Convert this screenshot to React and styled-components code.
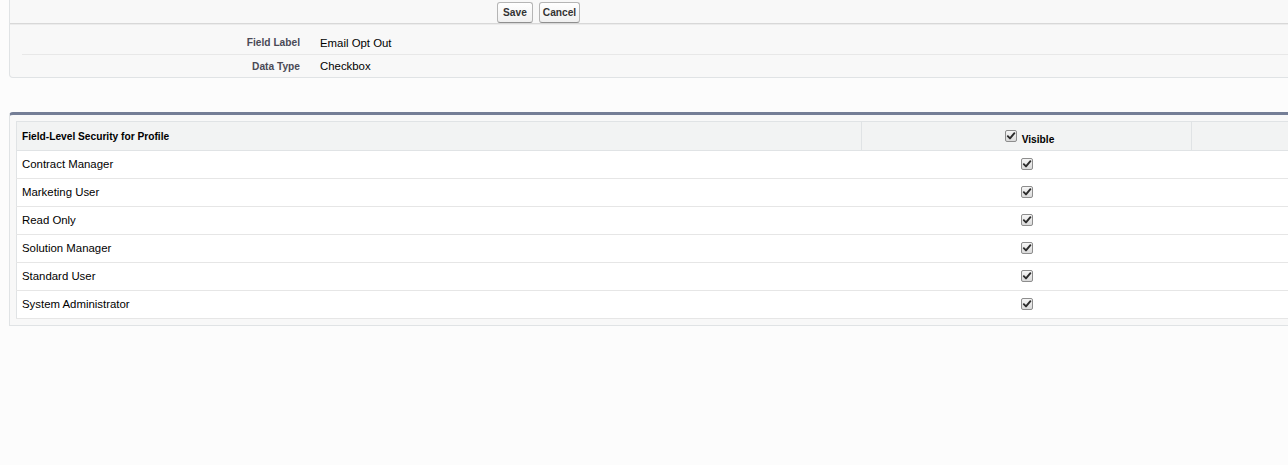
import React from 'react'
import styled, { createGlobalStyle } from 'styled-components'

const profiles = [
    'Contract Manager',
    'Marketing User',
    'Read Only',
    'Solution Manager',
    'Standard User',
    'System Administrator',
]

const details = [
    { label: 'Field Label', value: 'Email Opt Out' },
    { label: 'Data Type', value: 'Checkbox' },
]

const Check = () => (
    <CheckBox>
        <svg width="10" height="10" viewBox="0 0 10 10">
            <path d="M1.8 5.2 L4 7.4 L8.4 2.2" fill="none" stroke="#2b2b2b" strokeWidth="1.9" strokeLinecap="round" strokeLinejoin="round" />
        </svg>
    </CheckBox>
)

export default () => {
    return (
        <>
            <GlobalStyle />
            <Page>
                <DetailPanel>
                    <ButtonBar>
                        <Button pad={5}>Save</Button>
                        <Button pad={3}>Cancel</Button>
                    </ButtonBar>
                    <DetailList>
                        {details.map(d => (
                            <DetailRow key={d.label}>
                                <DetailLabel>{d.label}</DetailLabel>
                                <DetailValue>{d.value}</DetailValue>
                            </DetailRow>
                        ))}
                    </DetailList>
                </DetailPanel>

                <SecurityPanel>
                    <Table>
                        <colgroup>
                            <col style={{ width: 845 }} />
                            <col style={{ width: 330 }} />
                            <col />
                        </colgroup>
                        <thead>
                            <tr>
                                <HeadCell>Field-Level Security for Profile</HeadCell>
                                <HeadCell center>
                                    <VisibleHead>
                                        <Check />
                                        <VisibleText>Visible</VisibleText>
                                    </VisibleHead>
                                </HeadCell>
                                <HeadCell />
                            </tr>
                        </thead>
                        <tbody>
                            {profiles.map(p => (
                                <Row key={p}>
                                    <Cell>{p}</Cell>
                                    <Cell center><Check /></Cell>
                                    <Cell />
                                </Row>
                            ))}
                        </tbody>
                    </Table>
                </SecurityPanel>
            </Page>
        </>
    );
}

const GlobalStyle = createGlobalStyle`
    html, body {
        margin: 0;
        padding: 0;
        background: #fcfcfc;
        overflow: hidden;
    }
    body {
        font-family: "Liberation Sans", Arial, sans-serif;
        color: #000;
    }
`
const Page = styled.div`
    width: 1340px;
    padding-left: 9px;
`
const DetailPanel = styled.div`
    background: #f8f8f8;
    border: 1px solid #e0e3e5;
    border-top: none;
    border-bottom-left-radius: 4px;
`
const ButtonBar = styled.div`
    display: flex;
    align-items: center;
    gap: 6px;
    height: 23px;
    padding-left: 487px;
    border-bottom: 1px solid #d8d8d8;
    box-shadow: 0 1px 0 #ececec;
`
const Button = styled.button`
    height: 21px;
    margin-top: 1px;
    padding: 0 ${p => p.pad}px;
    font-family: "Liberation Sans", Arial, sans-serif;
    font-size: 10.2px;
    font-weight: bold;
    color: #333;
    background: linear-gradient(#ffffff, #f0f0f0);
    border: 1px solid #b5b5b5;
    border-bottom-color: #8f8f8f;
    border-radius: 3px;
`
const DetailList = styled.div`
    padding: 7px 0 0 12px;
`
const DetailRow = styled.div`
    display: grid;
    grid-template-columns: 288px 1fr;
    align-items: center;
    height: 23px;
    &:not(:last-child) {
        border-bottom: 1px solid #e8e8e8;
    }
    &:last-child {
        height: 22px;
    }
`
const DetailLabel = styled.span`
    padding-right: 10px;
    text-align: right;
    font-size: 10.2px;
    font-weight: bold;
    color: #4a4a56;
`
const DetailValue = styled.span`
    padding-left: 10px;
    font-size: 11.4px;
    color: #000;
`
const SecurityPanel = styled.div`
    margin-top: 34px;
    padding: 6px 0 6px 6px;
    background: #f8f8f8;
    border-top: 3px solid #747e96;
    border-left: 1px solid #e0e3e5;
    border-bottom: 1px solid #e0e3e5;
    border-top-left-radius: 4px;
`
const Table = styled.table`
    width: 100%;
    table-layout: fixed;
    border-collapse: collapse;
    background: #fff;
    border: 1px solid #e0e3e5;
`
const HeadCell = styled.th`
    height: 28px;
    padding: 0 5px;
    background: #f2f3f3;
    border: 1px solid #e0e3e5;
    text-align: ${p => (p.center ? 'center' : 'left')};
    vertical-align: middle;
    font-size: 10.2px;
    font-weight: bold;
    color: #000;
`
const VisibleHead = styled.span`
    display: inline-flex;
    align-items: flex-start;
    gap: 5px;
    padding-top: 4px;
    margin-left: 6px;
`
const VisibleText = styled.span`
    margin-top: 4px;
    line-height: 12px;
`
const Row = styled.tr`
    border-bottom: 1px solid #e6e6e6;
`
const Cell = styled.td`
    height: 26px;
    padding: 0 5px 1px;
    text-align: ${p => (p.center ? 'center' : 'left')};
    vertical-align: middle;
    font-size: 11.4px;
    color: #000;
`
const CheckBox = styled.span`
    display: inline-flex;
    align-items: center;
    justify-content: center;
    box-sizing: border-box;
    width: 12px;
    height: 12px;
    vertical-align: middle;
    border: 1px solid #8d8d8d;
    border-radius: 2px;
    background: linear-gradient(#f6f6f6, #dadada);
`
